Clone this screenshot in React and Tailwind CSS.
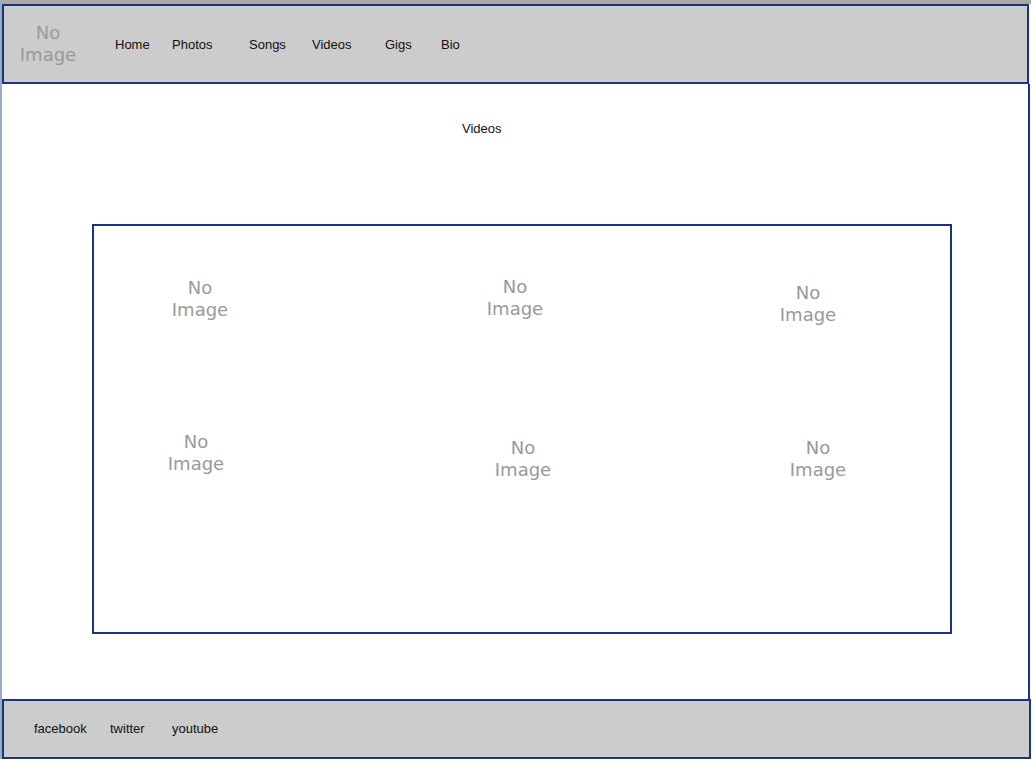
import React from 'react';

const navItems = [
  { label: 'Home', w: 'w-[57px]' },
  { label: 'Photos', w: 'w-[77px]' },
  { label: 'Songs', w: 'w-[63px]' },
  { label: 'Videos', w: 'w-[73px]' },
  { label: 'Gigs', w: 'w-[56px]' },
  { label: 'Bio', w: 'w-[40px]' },
];

const NoImage = ({ className = '' }) => (
  <div className={`w-[100px] text-center text-[18px] leading-[22px] text-[#999999] ${className}`} style={{ fontFamily: '"DejaVu Sans", sans-serif' }}>
    No
    <br />
    Image
  </div>
);

const App = () => {
  return (
    <div className="min-h-screen bg-white flex" style={{ fontFamily: '"Liberation Sans", Arial, sans-serif' }}>
      {/* left edge */}
      <div className="w-[2px] bg-[#9aabc4]" />

      <div className="flex flex-col">
        <div className="h-[4px] bg-[#a9a9a9]" />

        {/* Header */}
        <header className="h-[80px] w-[1027px] border-2 border-[#1b3380] bg-[#cccccc] flex items-center">
          <div className="w-[88px] text-center text-[18px] leading-[22px] text-[#999999]" style={{ fontFamily: '"DejaVu Sans", sans-serif' }}>
            No
            <br />
            Image
          </div>
          <nav className="ml-[23px] pt-[1px] flex text-[13px] leading-[16px] text-[#111111]">
            {navItems.map((item) => (
              <div key={item.label} className={item.w}>
                {item.label}
              </div>
            ))}
          </nav>
        </header>

        {/* Content */}
        <main className="h-[615px] w-[1028px] border-r-2 border-[#1b3380]">
          <div className="pt-[37px] pl-[460px] text-[13px] leading-[16px] text-[#111111]">Videos</div>

          <div className="mt-[87px] ml-[90px] w-[860px] h-[410px] border-2 border-[#1b3380]">
            <div className="h-[150px] flex items-start">
              <NoImage className="ml-[56px] mt-[51px]" />
              <NoImage className="ml-[215px] mt-[50px]" />
              <NoImage className="ml-[193px] mt-[56px]" />
            </div>
            <div className="flex items-start">
              <NoImage className="ml-[52px] mt-[55px]" />
              <NoImage className="ml-[227px] mt-[61px]" />
              <NoImage className="ml-[195px] mt-[61px]" />
            </div>
          </div>
        </main>

        {/* Footer */}
        <footer className="h-[60px] w-[1029px] border-2 border-[#1b3380] bg-[#cccccc] flex items-center pl-[30px] text-[13px] text-[#111111]">
          <div className="w-[76px]">facebook</div>
          <div className="w-[62px]">twitter</div>
          <div>youtube</div>
        </footer>
      </div>
    </div>
  );
};

export default App;
